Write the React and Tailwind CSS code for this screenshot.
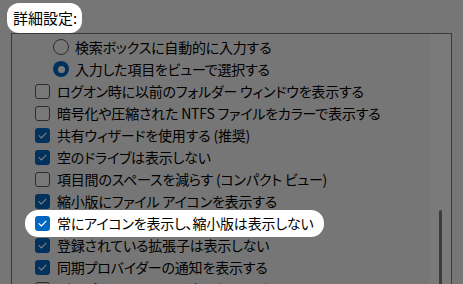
import React from "react";

const rows = [
  { type: "radio", checked: false, text: "検索ボックスに自動的に入力する" },
  { type: "radio", checked: true, text: "入力した項目をビューで選択する" },
  { type: "check", checked: false, text: "ログオン時に以前のフォルダー ウィンドウを表示する" },
  { type: "check", checked: false, text: "暗号化や圧縮された NTFS ファイルをカラーで表示する" },
  { type: "check", checked: true, text: "共有ウィザードを使用する (推奨)" },
  { type: "check", checked: true, text: "空のドライブは表示しない" },
  { type: "check", checked: false, text: "項目間のスペースを減らす (コンパクト ビュー)" },
  { type: "check", checked: true, text: "縮小版にファイル アイコンを表示する" },
  { type: "check", checked: true, text: "常にアイコンを表示し、縮小版は表示しない", hl: true },
  { type: "check", checked: true, text: "登録されている拡張子は表示しない" },
  { type: "check", checked: true, text: "同期プロバイダーの通知を表示する" },
  { type: "check", checked: false, text: "別のプロセスでフォルダー ウィンドウを開く" },
];

function Checkbox({ checked }) {
  if (checked) {
    return (
      <span className="flex h-[15px] w-[15px] shrink-0 items-center justify-center rounded-[3px] bg-[#0067c0]">
        <svg width="15" height="15" viewBox="0 0 15 15" fill="none">
          <path d="M4 7.6 L6.4 10 L11 5.2" stroke="white" strokeWidth="1.1" strokeLinecap="round" strokeLinejoin="round" />
        </svg>
      </span>
    );
  }
  return <span className="h-[15px] w-[15px] shrink-0 rounded-[3px] border border-[#5c5c5c] bg-[#f6f6f6]" />;
}

function Radio({ checked }) {
  if (checked) {
    return (
      <span className="flex h-[16px] w-[16px] shrink-0 items-center justify-center rounded-full bg-[#0067c0]">
        <span className="h-[7px] w-[7px] rounded-full bg-white" />
      </span>
    );
  }
  return <span className="h-[16px] w-[16px] shrink-0 rounded-full border border-[#5c5c5c] bg-[#f6f6f6]" />;
}

function Row({ row }) {
  const isRadio = row.type === "radio";
  const base = "flex h-[22px] items-center whitespace-nowrap";
  const indent = isRadio ? "pl-[41px] gap-[6px]" : "pl-[23px] gap-[7px]";
  if (row.hl) {
    return (
      <div className={base + " pl-[13px]"}>
        <div className="relative z-10 -my-[3px] flex h-[27px] w-fit items-center gap-[7px] rounded-[13px] bg-white pl-[10px] pr-[11px]">
          <Checkbox checked={row.checked} />
          <span className="leading-[22px]">{row.text}</span>
        </div>
      </div>
    );
  }
  return (
    <div className={base + " " + indent}>
      {isRadio ? <Radio checked={row.checked} /> : <Checkbox checked={row.checked} />}
      <span className="leading-[22px]">{row.text}</span>
    </div>
  );
}

export default function App() {
  return (
    <div
      className="relative h-[284px] w-[463px] overflow-hidden bg-[#f3f3f3] text-[14px] tracking-[-0.2px] text-black [font-family:'Noto_Sans_CJK_JP',sans-serif] [font-feature-settings:'palt']"
    >
      <div className="relative z-10 ml-[7px] mt-[3px] flex h-[30px] w-fit items-center rounded-[12px] bg-white pl-[6px] pr-[5px] text-[15px] tracking-normal">
        <span className="leading-[22px]">詳細設定:</span>
      </div>
      <div className="ml-[11px] flex h-[260px] w-[441px] border border-b-0 border-[#7a7a7a] bg-[#f3f3f3]">
        <div className="flex-1 pt-[2px]">
          {rows.map((r, i) => (
            <Row key={i} row={r} />
          ))}
        </div>
        <div className="flex w-[21px] justify-center bg-[#fbfbfb] pt-[176px]">
          <div className="h-[100px] w-[3px] rounded-full bg-[#7a7a7a]" />
        </div>
      </div>
      <div className="absolute inset-0 z-[5] bg-black/[0.515]" />
    </div>
  );
}
